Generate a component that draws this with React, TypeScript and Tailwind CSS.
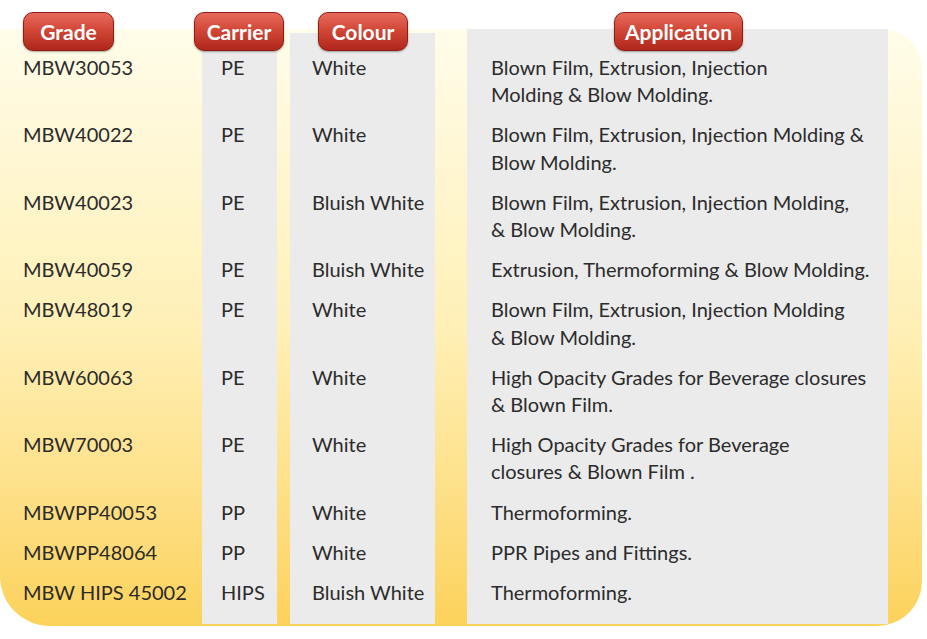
const rows: { grade: string; carrier: string; colour: string; app: string[] }[] = [
  { grade: "MBW30053", carrier: "PE", colour: "White", app: ["Blown Film, Extrusion, Injection", "Molding & Blow Molding."] },
  { grade: "MBW40022", carrier: "PE", colour: "White", app: ["Blown Film, Extrusion, Injection Molding &", "Blow Molding."] },
  { grade: "MBW40023", carrier: "PE", colour: "Bluish White", app: ["Blown Film, Extrusion, Injection Molding,", "& Blow Molding."] },
  { grade: "MBW40059", carrier: "PE", colour: "Bluish White", app: ["Extrusion, Thermoforming & Blow Molding."] },
  { grade: "MBW48019", carrier: "PE", colour: "White", app: ["Blown Film, Extrusion, Injection Molding", "& Blow Molding."] },
  { grade: "MBW60063", carrier: "PE", colour: "White", app: ["High Opacity Grades for Beverage closures", "& Blown Film."] },
  { grade: "MBW70003", carrier: "PE", colour: "White", app: ["High Opacity Grades for Beverage", "closures & Blown Film ."] },
  { grade: "MBWPP40053", carrier: "PP", colour: "White", app: ["Thermoforming."] },
  { grade: "MBWPP48064", carrier: "PP", colour: "White", app: ["PPR Pipes and Fittings."] },
  { grade: "MBW HIPS 45002", carrier: "HIPS", colour: "Bluish White", app: ["Thermoforming."] },
];

function Badge({ label, className }: { label: string; className: string }) {
  return (
    <div
      className={`relative z-10 -mt-[17px] flex h-[39px] items-center justify-center rounded-[10px] border border-[#8e1d14] bg-gradient-to-b from-[#e8695a] via-[#cf4434] to-[#b0261b] text-[21px] font-bold leading-none text-white shadow-[0_1px_2px_rgba(0,0,0,0.35)] ${className}`}
    >
      {label}
    </div>
  );
}

export default function App() {
  return (
    <div className="h-[639px] w-[927px] overflow-hidden bg-white pt-[29px] font-['Lato','Liberation_Sans',sans-serif] text-[20px] leading-[27.2px] text-[#2b2b2b]">
      <div className="grid w-[922px] grid-cols-[202px_88px_177px_455px] rounded-tr-[40px] rounded-br-[45px] rounded-bl-[50px] bg-gradient-to-b from-[#fffce9] via-[#fff0b6] to-[#fcd25a] pb-[2px]">
        {/* header */}
        <div className="h-[20px]">
          <Badge label="Grade" className="ml-[23px] w-[91px]" />
        </div>
        <div className="mr-[13px] h-[20px] bg-[#ebebeb]">
          <Badge label="Carrier" className="-ml-[8px] w-[90px]" />
        </div>
        <div className="mr-[32px] mt-[4px] h-[16px] bg-[#ebebeb]">
          <Badge label="Colour" className="-mt-[21px] ml-[28px] w-[90px]" />
        </div>
        <div className="mr-[34px] h-[20px] bg-[#ebebeb]">
          <Badge label="Application" className="ml-[147px] w-[129px]" />
        </div>

        {rows.map((r) => (
          <div key={r.grade} className="contents">
            <div className="whitespace-nowrap pb-[8px] pl-[23px] pt-[5px]">{r.grade}</div>
            <div className="mr-[13px] whitespace-nowrap bg-[#ebebeb] pb-[8px] pl-[19px] pt-[5px]">{r.carrier}</div>
            <div className="mr-[32px] whitespace-nowrap bg-[#ebebeb] pb-[8px] pl-[22px] pt-[5px]">{r.colour}</div>
            <div className="mr-[34px] whitespace-nowrap bg-[#ebebeb] pb-[8px] pl-[24px] pt-[5px]">
              {r.app.map((line) => (
                <div key={line}>{line}</div>
              ))}
            </div>
          </div>
        ))}

        {/* bottom edge of the columns */}
        <div className="h-[10px]" />
        <div className="mr-[13px] h-[10px] bg-[#ebebeb]" />
        <div className="mr-[32px] h-[10px] bg-[#ebebeb]" />
        <div className="mr-[34px] h-[10px] bg-[#ebebeb]" />
      </div>
    </div>
  );
}
